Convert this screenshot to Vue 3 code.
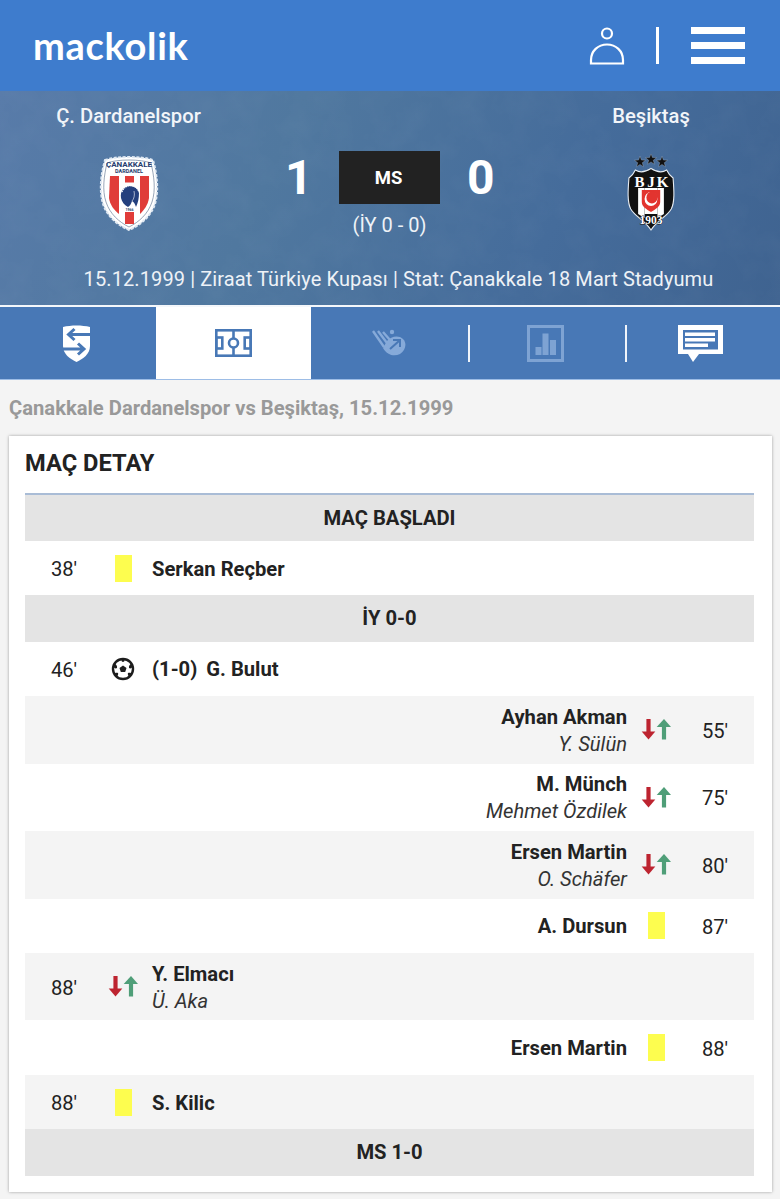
<template>
  <div class="page">
    <header class="topbar">
      <div class="logo">mackolik</div>
      <div class="top-actions">
        <svg class="user-icon" viewBox="0 0 36 38" fill="none" stroke="#fff" stroke-width="2.2">
          <circle cx="18" cy="6.5" r="5" />
          <path d="M2 36.5 V33 C2 24 9 17.5 18 17.5 C27 17.5 34 24 34 33 V36.5 Z" />
        </svg>
        <span class="top-sep"></span>
        <div class="burger"><i></i><i></i><i></i></div>
      </div>
    </header>

    <section class="hero">
      <svg class="hero-noise" width="780" height="214">
        <filter id="grain">
          <feTurbulence type="fractalNoise" baseFrequency="0.035" numOctaves="4" seed="7" />
          <feColorMatrix values="0 0 0 0 1  0 0 0 0 1  0 0 0 0 1  0.9 0 0 0 -0.3" />
        </filter>
        <rect width="780" height="214" filter="url(#grain)" opacity="0.05" />
      </svg>
      <div class="hero-main">
        <div class="team">
          <div class="team-name">Ç. Dardanelspor</div>
          <svg class="crest" viewBox="0 0 60 78">
            <path d="M6 6 C16 2 44 2 54 6 C58 20 60 36 56 50 C52 62 42 71 30 76 C18 71 8 62 4 50 C0 36 2 20 6 6 Z" fill="#fff" stroke="#dfe8f2" stroke-width="2" stroke-dasharray="3 1.5" />
            <path d="M8 9 C18 5 42 5 52 9 C55 22 57 36 53 48 C49 60 40 68 30 73 C20 68 11 60 7 48 C3 36 5 22 8 9 Z" fill="none" stroke="#6d7f99" stroke-width="0.7" />
            <text x="30" y="12.500" text-anchor="middle" class="crest-top">ÇANAKKALE</text>
            <text x="30" y="18.500" text-anchor="middle" class="crest-sub">DARDANEL</text>
            <path d="M11 22 H20 V60 C15 56 11 51 10 44 Z" fill="#e03c39" />
            <path d="M41 22 H50 V44 C49 51 45 56 41 60 Z" fill="#e03c39" />
            <rect x="26" y="22" width="9" height="6.500" fill="#e03c39" />
            <rect x="26" y="58" width="9" height="12" fill="#e03c39" />
            <path d="M22 44 C21 37 25 32 31 32 C36 32 39 35 40 39 C40 44 39 49 37 53 C36 50 35 48 33 47 C32 50 31 52 29 53 C25 51 23 48 22 44 Z" fill="#24407e" />
            <path d="M23 38 C25 33 29 31 33 32 C37 33 39 35 40 38" fill="none" stroke="#fff" stroke-width="1.200" stroke-dasharray="1.200 1" />
            <path d="M35 37 C36 41 35 45 33 47" fill="none" stroke="#fff" stroke-width="0.600" />
            <text x="30.500" y="56.500" text-anchor="middle" class="crest-year">1966</text>
          </svg>
        </div>

        <div class="score-box">
          <div class="score-row">
            <span class="score">1</span>
            <span class="status">MS</span>
            <span class="score">0</span>
          </div>
          <div class="half-score">(İY 0 - 0)</div>
        </div>

        <div class="team">
          <div class="team-name">Beşiktaş</div>
          <svg class="crest" viewBox="0 0 60 78">
            <g fill="#111" stroke="#c9d3df" stroke-width="0.300">
              <polygon v-for="s in stars" :key="s.x" :points="starPoints(s.x, s.y)" />
            </g>
            <g transform="translate(30 0) scale(0.92 1) translate(-30 0)">
              <path d="M6 24 C9 22 11 20 13 16 C18 19 24 18 30 14.500 C36 18 42 19 47 16 C49 20 51 22 54 24 C55 36 56 48 52 55 C47 63 38 65 30 76 C22 65 13 63 8 55 C4 48 5 36 6 24 Z" fill="#111" stroke="#e6ebf1" stroke-width="1.200" />
              <path d="M16 34 H23 V64 L16 60 Z M37 34 H44 V60 L37 64 Z" fill="#fff" />
              <rect x="23" y="34" width="14" height="26" fill="#fff" />
              <path d="M20 36 H40 V48 C40 53 35 55 30 58 C25 55 20 53 20 48 Z" fill="#e2342f" />
              <circle cx="30" cy="45" r="7" fill="#fff" />
              <circle cx="31" cy="43.500" r="6" fill="#e2342f" />
            </g>
            <text x="18.500" y="32.500" text-anchor="middle" class="bjk">B</text>
            <text x="30" y="32.500" text-anchor="middle" class="bjk">J</text>
            <text x="41.500" y="32.500" text-anchor="middle" class="bjk">K</text>
            <text x="30" y="69.500" text-anchor="middle" class="bjk-year">1903</text>
          </svg>
        </div>
      </div>
      <div class="match-info">15.12.1999 | Ziraat Türkiye Kupası | Stat: Çanakkale 18 Mart Stadyumu</div>
    </section>

    <nav class="tabs">
      <div class="tab">
        <svg class="tab-icon shield" width="27" height="37" viewBox="0 0 27 37">
          <path d="M0 2 C8 0 19 0 27 2 V21 C27 29 20 34 13.500 37 C7 34 0 29 0 21 Z" fill="#fff" />
          <g fill="none" stroke="#4878b6" stroke-width="3">
            <path d="M27 9.500 H6 M11.500 4 L5.500 9.500 L11.500 15" />
            <path d="M0 24 H20 M15 18.500 L21 24 L15 29.500" />
          </g>
        </svg>
      </div>
      <div class="tab active">
        <svg class="tab-icon" width="37" height="28" viewBox="0 0 37 28" fill="none" stroke="#4878b6" stroke-width="2.600">
          <rect x="1.300" y="1.300" width="34.400" height="25.400" />
          <path d="M18.500 1 V27" />
          <circle cx="18.500" cy="14" r="4.500" fill="#fff" />
          <rect x="1.300" y="8.500" width="6" height="11" />
          <rect x="29.700" y="8.500" width="6" height="11" />
        </svg>
      </div>
      <div class="tab">
        <svg class="tab-icon" width="34" height="28" viewBox="0 0 34 28" fill="none" stroke="#86aad9" stroke-width="2.400">
          <path d="M1 2 L12 18 M6 2 L15 14 M11 3 L18 11" />
          <path d="M15 12 C19 7 27 6 31 10 C35 14 34 21 28 25 C22 28 15 26 11 19 Z" fill="#86aad9" stroke="none" />
          <path d="M18 20 L27 12 M21 11 H28 V18" stroke="#4878b6" stroke-width="2" />
          <circle cx="20" cy="3" r="2.200" fill="#86aad9" stroke="none" />
        </svg>
      </div>
      <div class="tab with-sep">
        <svg class="tab-icon" width="37" height="37" viewBox="0 0 37 37">
          <rect x="1.500" y="1.500" width="34" height="34" fill="none" stroke="#7ea3d3" stroke-width="3" />
          <rect x="8.500" y="22" width="6" height="8" fill="#7ea3d3" />
          <rect x="15.500" y="8.500" width="6" height="21.500" fill="#7ea3d3" />
          <rect x="23" y="15" width="6" height="15" fill="#7ea3d3" />
        </svg>
      </div>
      <div class="tab with-sep">
        <svg class="tab-icon comment" width="45" height="37" viewBox="0 0 45 37">
          <path d="M0 0 H45 V29 H21 L15 37 L10 29 H0 Z" fill="#fff" />
          <rect x="5" y="5" width="35" height="19.500" fill="#4878b6" />
          <rect x="7" y="7.500" width="30" height="3.500" fill="#fff" />
          <rect x="7" y="13" width="30" height="3.500" fill="#fff" />
          <rect x="7" y="18.500" width="23" height="3.500" fill="#fff" />
        </svg>
      </div>
    </nav>

    <main class="content">
      <h1 class="page-title">Çanakkale Dardanelspor vs Beşiktaş, 15.12.1999</h1>
      <div class="card">
        <h2 class="card-title">MAÇ DETAY</h2>
        <div class="events">
          <template v-for="(item, i) in events" :key="i">
            <div v-if="item.band" class="band">{{ item.band }}</div>
            <div
              v-else
              class="event"
              :class="{ away: item.away, shaded: item.shaded, double: item.sub }"
            >
              <div class="minute">{{ item.min }}</div>
              <div class="event-icon">
                <span v-if="item.type === 'card'" class="yellow-card"></span>
                <svg v-else-if="item.type === 'goal'" width="24" height="24" viewBox="0 0 24 24">
                  <circle cx="12" cy="12" r="10" fill="#fff" stroke="#1d1d1d" stroke-width="2.400" />
                  <polygon points="12,8.500 15.500,11 14.200,15 9.800,15 8.500,11" fill="#1d1d1d" />
                  <path d="M12 1.500 C10 3 10 4.500 12 5 C14 4.500 14 3 12 1.500 Z M2 9 C3 11 4.500 12 6 11 C6.500 9 5 7 3.500 6.500 Z M22 9 C21 11 19.500 12 18 11 C17.500 9 19 7 20.500 6.500 Z M6 20 C7 18 7.500 17 7 16 C5.500 15.500 4 16 3.500 17 Z M18 20 C17 18 16.500 17 17 16 C18.500 15.500 20 16 20.500 17 Z" fill="#1d1d1d" />
                </svg>
                <svg v-else width="30" height="21" viewBox="0 0 30 21">
                  <path d="M7.500 0 V14" stroke="#bd2430" stroke-width="4.200" />
                  <path d="M0.700 12.500 H14.300 L7.500 20.500 Z" fill="#bd2430" />
                  <path d="M23 20.500 V7" stroke="#4f9e78" stroke-width="4.200" />
                  <path d="M15.700 8 H30 L23 0 Z" fill="#4f9e78" />
                </svg>
              </div>
              <div class="names">
                <div class="player">
                  <span v-if="item.goal" class="goal-score">{{ item.goal }}</span>{{ item.player }}
                </div>
                <div v-if="item.sub" class="sub-player">{{ item.sub }}</div>
              </div>
            </div>
          </template>
        </div>
      </div>
    </main>
  </div>
</template>

<script setup>
const events = [
  { band: 'MAÇ BAŞLADI' },
  { min: "38'", type: 'card', player: 'Serkan Reçber' },
  { band: 'İY 0-0' },
  { min: "46'", type: 'goal', goal: '(1-0)', player: 'G. Bulut' },
  { min: "55'", type: 'swap', player: 'Ayhan Akman', sub: 'Y. Sülün', away: true, shaded: true },
  { min: "75'", type: 'swap', player: 'M. Münch', sub: 'Mehmet Özdilek', away: true },
  { min: "80'", type: 'swap', player: 'Ersen Martin', sub: 'O. Schäfer', away: true, shaded: true },
  { min: "87'", type: 'card', player: 'A. Dursun', away: true },
  { min: "88'", type: 'swap', player: 'Y. Elmacı', sub: 'Ü. Aka', shaded: true },
  { min: "88'", type: 'card', player: 'Ersen Martin', away: true },
  { min: "88'", type: 'card', player: 'S. Kilic', shaded: true },
  { band: 'MS 1-0' }
]

const stars = [
  { x: 19, y: 8 },
  { x: 30, y: 5.5 },
  { x: 41, y: 8 }
]

// yildiz koordinatlari
const starPoints = (cx, cy) => {
  const pts = []
  for (let i = 0; i < 10; i++) {
    const r = i % 2 ? 2.4 : 5.8
    const a = -Math.PI / 2 + (i * Math.PI) / 5
    pts.push(`${(cx + r * Math.cos(a)).toFixed(2)},${(cy + r * Math.sin(a)).toFixed(2)}`)
  }
  return pts.join(' ')
}
</script>

<style>
html,
body {
  margin: 0;
  background: #f4f4f4;
}
</style>

<style scoped>
.page {
  width: 780px;
  height: 1199px;
  overflow: hidden;
  background: #f4f4f4;
  font-family: Roboto, "Liberation Sans", sans-serif;
  color: #222;
}

.topbar {
  height: 91px;
  box-sizing: border-box;
  padding: 0 35px 0 33px;
  display: flex;
  align-items: center;
  justify-content: space-between;
  background: #3e7ccd;
}

.logo {
  font-family: Lato, "Open Sans", sans-serif;
  font-size: 38px;
  font-weight: 700;
  letter-spacing: 0.7px;
  line-height: 1;
  color: #fff;
  margin-top: -2px;
}

.top-actions {
  display: flex;
  align-items: center;
}

.user-icon {
  width: 36px;
  height: 38px;
  margin-right: 31px;
}

.top-sep {
  width: 3px;
  height: 37px;
  background: #fff;
  margin-right: 32px;
}

.burger {
  width: 54px;
  height: 37px;
  display: flex;
  flex-direction: column;
  justify-content: space-between;
}

.burger i {
  display: block;
  height: 7px;
  background: #fff;
}

.hero {
  position: relative;
  height: 214px;
  box-sizing: border-box;
  padding-top: 13px;
  background: linear-gradient(115deg, #587ba9 0%, #50789f 35%, #456c9b 70%, #3f6390 100%);
  color: #fff;
}

.hero-noise {
  position: absolute;
  left: 0;
  top: 0;
}

.hero-main {
  position: relative;
  display: grid;
  grid-template-columns: 257px 1fr 258px;
}

.team {
  display: flex;
  flex-direction: column;
  align-items: center;
}

.team-name {
  font-size: 20.2px;
  font-weight: 500;
  line-height: 24px;
  color: #f2f5f9;
}

.crest {
  width: 60px;
  height: 78px;
  margin-top: 26px;
}

.crest-top {
  font: 700 8px Roboto, sans-serif;
  fill: #27406f;
}

.crest-sub {
  font: 700 5.500px Roboto, sans-serif;
  fill: #27406f;
}

.crest-year {
  font: 700 3.500px Roboto, sans-serif;
  fill: #27406f;
}

.bjk {
  font: 700 15px "Liberation Serif", serif;
  fill: #fff;
}

.bjk-year {
  font: 700 11.500px "Liberation Serif", serif;
  fill: #fff;
  stroke: #111;
  stroke-width: 0.800px;
  paint-order: stroke;
}

.score-box {
  display: flex;
  flex-direction: column;
  align-items: center;
  padding-top: 47px;
}

.score-row {
  display: flex;
  align-items: center;
  gap: 27px;
}

.score {
  width: 27px;
  text-align: center;
  font-size: 48px;
  font-weight: 700;
  line-height: 53px;
}

.status {
  width: 101px;
  height: 53px;
  padding-right: 2px;
  box-sizing: border-box;
  display: flex;
  align-items: center;
  justify-content: center;
  background: #222;
  font-size: 18.5px;
  font-weight: 700;
}

.half-score {
  font-size: 20px;
  line-height: 24px;
  margin-top: 9px;
  color: #eef2f7;
}

.match-info {
  position: relative;
  margin-top: 30px;
  padding-left: 17px;
  text-align: center;
  font-size: 20px;
  letter-spacing: 0.1px;
  line-height: 24px;
  color: #eef2f7;
}

.tabs {
  display: grid;
  grid-template-columns: 155.5px 155.5px repeat(3, 156.33px);
  height: 75px;
  box-sizing: border-box;
  border-top: 2px solid #f4f7fb;
  border-bottom: 1px solid #9dbde6;
  background: #4878b6;
}

.tab {
  position: relative;
  display: flex;
  align-items: center;
  justify-content: center;
}

.tab.active {
  background: #fff;
}

.shield {
  margin-right: 3px;
}

.comment {
  margin-right: 2px;
}

.tab.with-sep::before {
  content: "";
  position: absolute;
  left: 1px;
  top: 18px;
  width: 2px;
  height: 37px;
  background: #f0f4fa;
}

.content {
  padding: 0 0 0 9px;
}

.page-title {
  margin: 0;
  height: 56px;
  display: flex;
  align-items: center;
  font-size: 20.2px;
  font-weight: 700;
  color: #999;
}

.card {
  width: 763px;
  box-sizing: border-box;
  background: #fff;
  padding: 0 18px 16.5px 16px;
  box-shadow: 0 0 3px rgba(0, 0, 0, 0.35);
}

.card-title {
  margin: 0;
  height: 58.5px;
  box-sizing: border-box;
  padding-bottom: 3px;
  border-bottom: 2px solid #a9bcd6;
  display: flex;
  align-items: center;
  font-size: 23.7px;
  font-weight: 700;
  color: #222;
}

.band {
  height: 46.4px;
  display: flex;
  align-items: center;
  justify-content: center;
  background: #e4e4e4;
  font-size: 20.2px;
  font-weight: 700;
  color: #222;
}

.event {
  height: 54.4px;
  display: flex;
  align-items: center;
  font-size: 20.2px;
}

.event.double {
  height: 67.5px;
}

.event.shaded {
  background: #f4f4f4;
}

.event.away {
  flex-direction: row-reverse;
  text-align: right;
}

.minute {
  width: 78px;
  flex: none;
  padding-top: 2px;
  text-align: center;
}

.event-icon {
  width: 40px;
  flex: none;
  display: flex;
  align-items: center;
  justify-content: center;
}

.yellow-card {
  display: block;
  width: 17px;
  height: 27px;
  background: #fdfd4f;
}

.names {
  flex: 1;
  padding: 2px 9px 0;
}

.player {
  font-weight: 700;
  line-height: 27px;
}

.goal-score {
  margin-right: 9px;
}

.sub-player {
  font-style: italic;
  line-height: 27px;
  color: #333;
}
</style>
